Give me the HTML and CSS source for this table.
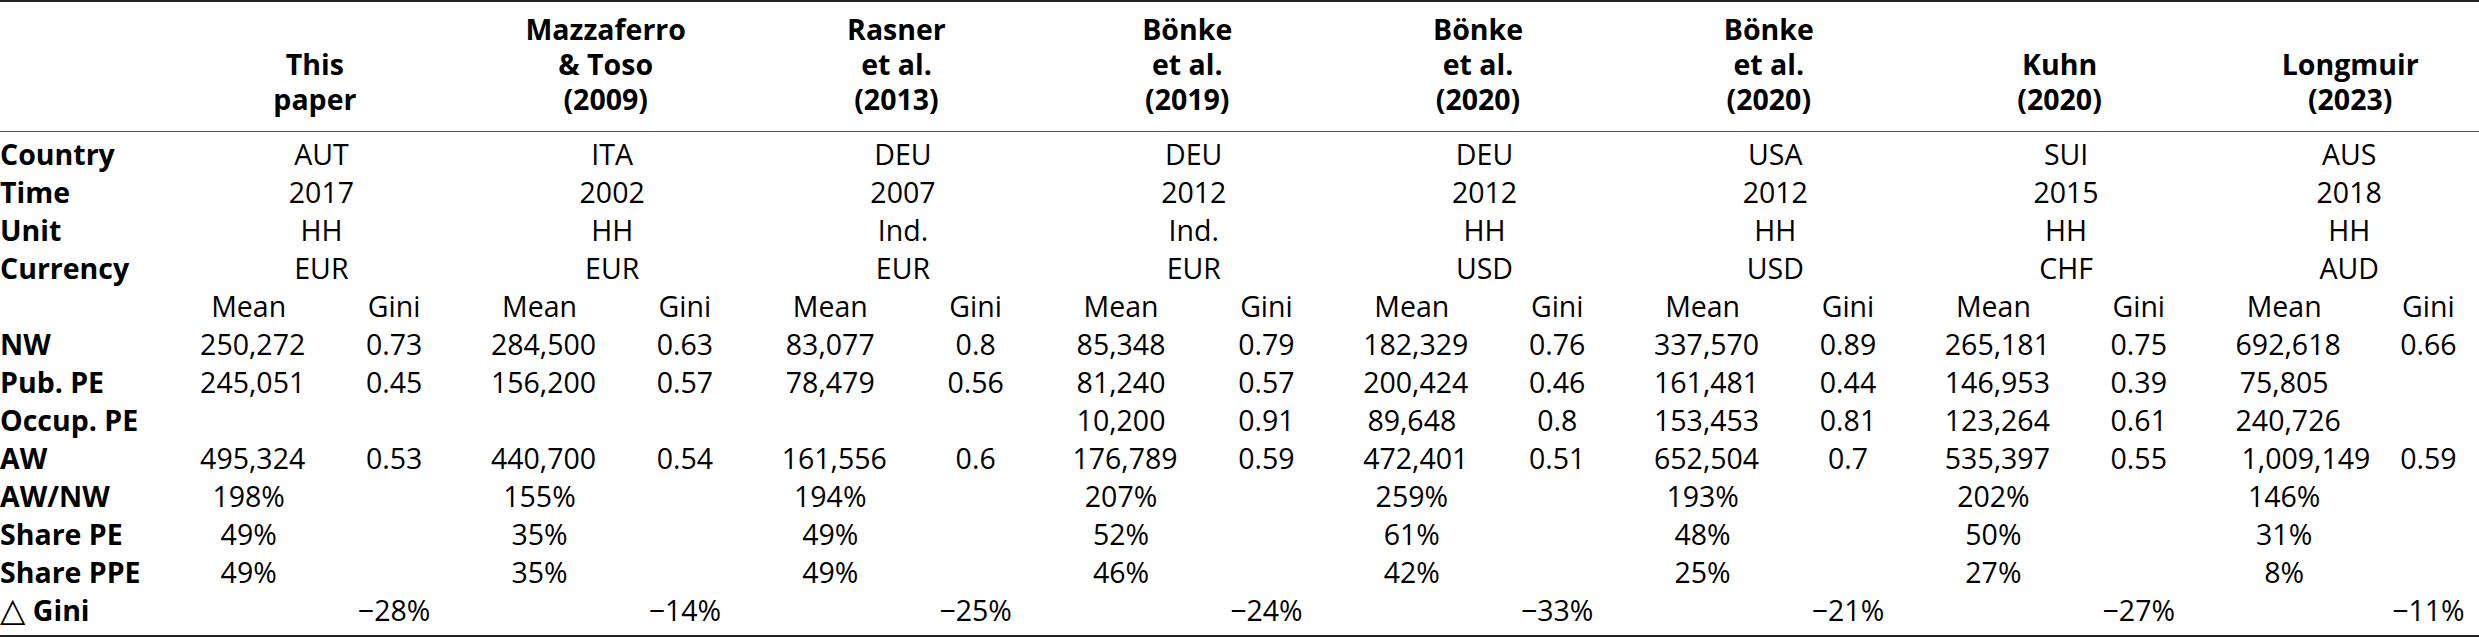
FILE: index.html
```html
<!DOCTYPE html>
<html lang="en">
<head>
<meta charset="utf-8">
<title>Comparison of studies</title>
<link rel="stylesheet" href="styles.css">
</head>
<body>
<div class="tbl">
  <div class="cols head">
    <div class="lbl"></div>
    <div class="study">This<br>paper</div>
    <div class="study">Mazzaferro<br>&amp; Toso<br>(2009)</div>
    <div class="study">Rasner<br>et al.<br>(2013)</div>
    <div class="study">Bönke<br>et al.<br>(2019)</div>
    <div class="study">Bönke<br>et al.<br>(2020)</div>
    <div class="study">Bönke<br>et al.<br>(2020)</div>
    <div class="study">Kuhn<br>(2020)</div>
    <div class="study last">Longmuir<br>(2023)</div>
  </div>
  <div class="cols body">
    <div class="lbl">Country</div>
    <div class="c sp">AUT</div><div class="c sp">ITA</div><div class="c sp">DEU</div><div class="c sp">DEU</div>
    <div class="c sp">DEU</div><div class="c sp">USA</div><div class="c sp">SUI</div><div class="c sp lastsp">AUS</div>

    <div class="lbl">Time</div>
    <div class="c sp">2017</div><div class="c sp">2002</div><div class="c sp">2007</div><div class="c sp">2012</div>
    <div class="c sp">2012</div><div class="c sp">2012</div><div class="c sp">2015</div><div class="c sp lastsp">2018</div>

    <div class="lbl">Unit</div>
    <div class="c sp">HH</div><div class="c sp">HH</div><div class="c sp">Ind.</div><div class="c sp">Ind.</div>
    <div class="c sp">HH</div><div class="c sp">HH</div><div class="c sp">HH</div><div class="c sp lastsp">HH</div>

    <div class="lbl">Currency</div>
    <div class="c sp">EUR</div><div class="c sp">EUR</div><div class="c sp">EUR</div><div class="c sp">EUR</div>
    <div class="c sp">USD</div><div class="c sp">USD</div><div class="c sp">CHF</div><div class="c sp lastsp">AUD</div>

    <div class="lbl"></div>
    <div class="c">Mean</div><div class="c">Gini</div>
    <div class="c">Mean</div><div class="c">Gini</div>
    <div class="c">Mean</div><div class="c">Gini</div>
    <div class="c">Mean</div><div class="c">Gini</div>
    <div class="c">Mean</div><div class="c">Gini</div>
    <div class="c">Mean</div><div class="c">Gini</div>
    <div class="c">Mean</div><div class="c">Gini</div>
    <div class="c">Mean</div><div class="c lastcol">Gini</div>

    <div class="lbl">NW</div>
    <div class="c r4">250,272</div><div class="c">0.73</div>
    <div class="c r4">284,500</div><div class="c">0.63</div>
    <div class="c">83,077</div><div class="c">0.8</div>
    <div class="c">85,348</div><div class="c">0.79</div>
    <div class="c r4">182,329</div><div class="c">0.76</div>
    <div class="c r4">337,570</div><div class="c">0.89</div>
    <div class="c r4">265,181</div><div class="c">0.75</div>
    <div class="c r4">692,618</div><div class="c lastcol">0.66</div>

    <div class="lbl">Pub. PE</div>
    <div class="c r4">245,051</div><div class="c">0.45</div>
    <div class="c r4">156,200</div><div class="c">0.57</div>
    <div class="c">78,479</div><div class="c">0.56</div>
    <div class="c">81,240</div><div class="c">0.57</div>
    <div class="c r4">200,424</div><div class="c">0.46</div>
    <div class="c r4">161,481</div><div class="c">0.44</div>
    <div class="c r4">146,953</div><div class="c">0.39</div>
    <div class="c">75,805</div><div class="c lastcol"></div>

    <div class="lbl">Occup. PE</div>
    <div class="c"></div><div class="c"></div>
    <div class="c"></div><div class="c"></div>
    <div class="c"></div><div class="c"></div>
    <div class="c">10,200</div><div class="c">0.91</div>
    <div class="c">89,648</div><div class="c">0.8</div>
    <div class="c r4">153,453</div><div class="c">0.81</div>
    <div class="c r4">123,264</div><div class="c">0.61</div>
    <div class="c r4">240,726</div><div class="c lastcol"></div>

    <div class="lbl">AW</div>
    <div class="c r4">495,324</div><div class="c">0.53</div>
    <div class="c r4">440,700</div><div class="c">0.54</div>
    <div class="c r4">161,556</div><div class="c">0.6</div>
    <div class="c r4">176,789</div><div class="c">0.59</div>
    <div class="c r4">472,401</div><div class="c">0.51</div>
    <div class="c r4">652,504</div><div class="c">0.7</div>
    <div class="c r4">535,397</div><div class="c">0.55</div>
    <div class="c r15">1,009,149</div><div class="c lastcol">0.59</div>

    <div class="lbl">AW/NW</div>
    <div class="c">198%</div><div class="c"></div>
    <div class="c">155%</div><div class="c"></div>
    <div class="c">194%</div><div class="c"></div>
    <div class="c">207%</div><div class="c"></div>
    <div class="c">259%</div><div class="c"></div>
    <div class="c">193%</div><div class="c"></div>
    <div class="c">202%</div><div class="c"></div>
    <div class="c">146%</div><div class="c lastcol"></div>

    <div class="lbl">Share PE</div>
    <div class="c">49%</div><div class="c"></div>
    <div class="c">35%</div><div class="c"></div>
    <div class="c">49%</div><div class="c"></div>
    <div class="c">52%</div><div class="c"></div>
    <div class="c">61%</div><div class="c"></div>
    <div class="c">48%</div><div class="c"></div>
    <div class="c">50%</div><div class="c"></div>
    <div class="c">31%</div><div class="c lastcol"></div>

    <div class="lbl">Share PPE</div>
    <div class="c">49%</div><div class="c"></div>
    <div class="c">35%</div><div class="c"></div>
    <div class="c">49%</div><div class="c"></div>
    <div class="c">46%</div><div class="c"></div>
    <div class="c">42%</div><div class="c"></div>
    <div class="c">25%</div><div class="c"></div>
    <div class="c">27%</div><div class="c"></div>
    <div class="c">8%</div><div class="c lastcol"></div>

    <div class="lbl"><span class="tri">△</span> Gini</div>
    <div class="c"></div><div class="c">−28%</div>
    <div class="c"></div><div class="c">−14%</div>
    <div class="c"></div><div class="c">−25%</div>
    <div class="c"></div><div class="c">−24%</div>
    <div class="c"></div><div class="c">−33%</div>
    <div class="c"></div><div class="c">−21%</div>
    <div class="c"></div><div class="c">−27%</div>
    <div class="c"></div><div class="c lastcol">−11%</div>
  </div>
</div>
</body>
</html>
```

FILE: styles.css
```css
html, body {
  margin: 0;
  padding: 0;
  background: #ffffff;
  overflow: hidden;
}

.tbl {
  width: 2479px;
  font-family: "Open Sans", "Noto Sans", sans-serif;
  font-size: 28.5px;
  color: #000000;
  border-top: 2px solid #222222;
  border-bottom: 2px solid #222222;
}

.cols {
  display: grid;
  grid-template-columns: 176px repeat(15, 145.4px) 122px;
}

.head {
  padding: 10px 0 14px;
  line-height: 35px;
  font-weight: 700;
  align-items: end;
  border-bottom: 1px solid #555555;
}

.study {
  grid-column: span 2;
  text-align: center;
  padding-right: 13px;
  white-space: nowrap;
}

.study.last {
  padding-right: 0;
  padding-left: 10px;
}

.body {
  padding: 3px 0 6px;
  line-height: 38px;
  grid-auto-rows: 38px;
}

.lbl {
  font-weight: 700;
  white-space: nowrap;
}

.tri {
  font-family: "DejaVu Sans", sans-serif;
  font-weight: 400;
  font-size: 33px;
  line-height: 1;
}

.c {
  text-align: center;
  white-space: nowrap;
}

.sp {
  grid-column: span 2;
}

.sp.lastsp {
  padding-left: 8px;
}

.lastcol {
  padding-left: 21px;
}

.r4 {
  padding-left: 8px;
}

.r15 {
  padding-left: 30px;
}
```
